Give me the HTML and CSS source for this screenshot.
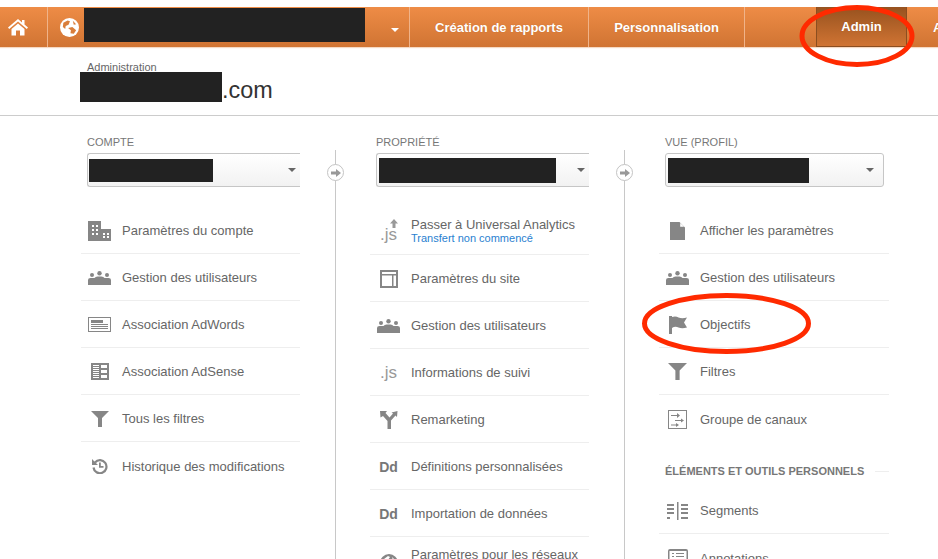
FILE: index.html
```html
<!DOCTYPE html>
<html lang="fr">
<head>
<meta charset="utf-8">
<title>Administration</title>
<link rel="stylesheet" href="styles.css">
</head>
<body>
<svg width="0" height="0" class="defs">
  <defs>
    <symbol id="i-users" viewBox="0 0 23 14">
      <circle cx="11.500" cy="2.200" r="2.200"/><circle cx="4" cy="4" r="2"/><circle cx="19" cy="4" r="2"/>
      <path d="M0 14V9Q0 7 2.500 7H6.500Q7.500 5.500 9.500 5.500H13.500Q15.500 5.500 16.500 7H20.500Q23 7 23 9V14Z"/>
    </symbol>
    <symbol id="i-filter" viewBox="0 0 18 16">
      <path d="M0 0H18L11 7V16H7V7Z"/>
    </symbol>
  </defs>
</svg>
<header class="nav">
  <a class="nav-home"><svg viewBox="0 0 20 18" width="20" height="18" class="ico-white"><path d="M10 1 0 9.500 1.200 11 10 3.600 18.800 11 20 9.500 16.500 6.500V2H14V4.400ZM3.500 11V17.500H8V12.500H12V17.500H16.500V11L10 5.500Z"/></svg></a>
  <div class="nav-account">
    <svg viewBox="0 0 20 20" width="19" height="19" class="globe"><circle cx="10" cy="10" r="10" fill="#fff"/><path d="M3.500 5 8 2.500 10.500 3.500 9 7 6 8.500 5.500 11.500 3 9.500ZM8.500 10.500 13 9.500 17 13 14.500 16.500 11 16 11.500 13ZM13.500 3 17 6.500 14.500 7Z" fill="#d97e3b"/></svg>
    <span class="redact redact-nav"></span>
    <span class="nav-caret"></span>
  </div>
  <a class="nav-tab nav-reports">Création de rapports</a>
  <a class="nav-tab nav-custom">Personnalisation</a>
  <div class="nav-spacer"></div>
  <a class="nav-tab nav-admin">Admin</a>
  <a class="nav-tab nav-next">A</a>
</header>

<section class="title">
  <div class="title-label">Administration</div>
  <div class="title-name"><span class="redact redact-title"></span>.com</div>
</section>

<main class="columns">
  <section class="col col-account">
    <h2 class="col-label">COMPTE</h2>
    <div class="select select-open"><span class="redact redact-1"></span><span class="caret"></span></div>
    <ul class="rows">
      <li class="row"><span class="icon"><svg viewBox="0 0 23 20" width="23" height="20"><path fill-rule="evenodd" d="M0 0H13V8H23V20H0ZM4 4V6H6V4ZM8 4V6H10V4ZM4 8V10H6V8ZM8 8V10H10V8ZM4 12V14H6V12ZM8 12V14H10V12ZM15 12V14H17V12ZM19 12V14H21V12ZM15 15V17H17V15ZM19 15V17H21V15Z"/></svg></span>Paramètres du compte</li>
      <li class="row"><span class="icon"><svg width="23" height="14"><use href="#i-users"/></svg></span>Gestion des utilisateurs</li>
      <li class="row"><span class="icon"><svg viewBox="0 0 23 15" width="23" height="15"><path fill-rule="evenodd" d="M0 0H23V15H0ZM1 1V14H22V1Z"/><path d="M3 3H15V6H3ZM3 7H20V8H3ZM3 9H20V10H3ZM3 11H20V12H3Z"/></svg></span>Association AdWords</li>
      <li class="row"><span class="icon"><svg viewBox="0 0 18 17" width="18" height="17"><path fill-rule="evenodd" d="M0 0H18V17H0ZM2 2V3H8V2ZM2 4V5H8V4ZM2 6V7H8V6ZM2 8V9H8V8ZM2 10V11H8V10ZM2 12V13H8V12ZM2 14V15H8V14ZM10 2V5H16V2ZM10 7V10H16V7ZM10 12V15H16V12Z"/></svg></span>Association AdSense</li>
      <li class="row"><span class="icon"><svg width="18" height="16"><use href="#i-filter"/></svg></span>Tous les filtres</li>
      <li class="row"><span class="icon"><svg viewBox="0 0 16 16" width="16" height="16"><path d="M3 4.500A6.500 6.500 0 1 1 1.500 9.500" class="stroke-icon"/><path d="M0 1V7H6ZM7 4.500H8.800V8H11.500V9.800H7Z"/></svg></span>Historique des modifications</li>
    </ul>
  </section>

  <div class="rail"><span class="rail-dot"><svg viewBox="0 0 10 8" width="10" height="8"><path d="M0 2.500H5V0L10 4 5 8V5.500H0Z"/></svg></span></div>

  <section class="col col-property">
    <h2 class="col-label">PROPRIÉTÉ</h2>
    <div class="select select-open select-wide"><span class="redact redact-2"></span><span class="caret"></span></div>
    <ul class="rows">
      <li class="row row-js"><span class="icon icon-js">.js<svg viewBox="0 0 8 9" width="8" height="9" class="js-up"><path d="M4 0 8 4.500H5.500V9H2.500V4.500H0Z"/></svg></span><span class="row-two">Passer à Universal Analytics<small class="row-sub">Transfert non commencé</small></span></li>
      <li class="row"><span class="icon"><svg viewBox="0 0 18 18" width="18" height="18"><path fill-rule="evenodd" d="M0 0H18V18H0ZM2 2V4H16V2ZM2 5.500V16H12V5.500ZM13.500 5.500V16H16V5.500Z"/></svg></span>Paramètres du site</li>
      <li class="row"><span class="icon"><svg width="23" height="14"><use href="#i-users"/></svg></span>Gestion des utilisateurs</li>
      <li class="row"><span class="icon icon-js">.js</span>Informations de suivi</li>
      <li class="row"><span class="icon"><svg viewBox="0 0 18 18" width="18" height="18"><path d="M0 0H7L5.500 2 9.500 6.500 13 2.500 11.500 1.500 17.500 0 17 6 15.500 4.500 11 9.500V18H7.500V10L3 5 0.500 6.500Z"/></svg></span>Remarketing</li>
      <li class="row"><span class="icon icon-dd">Dd</span>Définitions personnalisées</li>
      <li class="row"><span class="icon icon-dd">Dd</span>Importation de données</li>
      <li class="row row-social"><span class="icon"><svg viewBox="0 0 18 18" width="18" height="18"><path fill-rule="evenodd" d="M9 0A9 9 0 1 1 9 18 9 9 0 0 1 9 0ZM4 5 8 2 10 3 8 6 5 7ZM12 3 15 6 13 6.500Z"/></svg></span><span class="row-two">Paramètres pour les réseaux</span></li>
    </ul>
  </section>

  <div class="rail"><span class="rail-dot"><svg viewBox="0 0 10 8" width="10" height="8"><path d="M0 2.500H5V0L10 4 5 8V5.500H0Z"/></svg></span></div>

  <section class="col col-view">
    <h2 class="col-label">VUE (PROFIL)</h2>
    <div class="select select-closed"><span class="redact redact-3"></span><span class="caret"></span></div>
    <ul class="rows">
      <li class="row"><span class="icon"><svg viewBox="0 0 15 18" width="15" height="18"><path d="M0 0H9.500L15 5.500V18H0ZM10.200 1V4.800H14Z" fill-rule="evenodd"/></svg></span>Afficher les paramètres</li>
      <li class="row"><span class="icon"><svg width="23" height="14"><use href="#i-users"/></svg></span>Gestion des utilisateurs</li>
      <li class="row"><span class="icon"><svg viewBox="0 0 18 18" width="18" height="18"><path d="M0 0H3V18H0ZM3 1Q7 0 9.500 1.500 13 3 18 1.500L15 6.500 18 11.500Q13 13 9.500 11.500 6 10 3 12Z"/></svg></span>Objectifs</li>
      <li class="row"><span class="icon"><svg width="19" height="17"><use href="#i-filter"/></svg></span>Filtres</li>
      <li class="row row-last"><span class="icon"><svg viewBox="0 0 19 19" width="19" height="19"><path fill-rule="evenodd" d="M0 0H19V19H0ZM1 1V18H18V1Z"/><path d="M3 5H9V3L12 5.500 9 8V6H3ZM7 10H13V8.500L16 10.500 13 12.500V11H7ZM3 14.500H8V13L11 15 8 17V15.500H3Z"/></svg></span>Groupe de canaux</li>
    </ul>
    <h3 class="section-title"><span>ÉLÉMENTS ET OUTILS PERSONNELS</span></h3>
    <ul class="rows">
      <li class="row row-seg"><span class="icon"><svg viewBox="0 0 21 18" width="21" height="18"><path d="M10 0H11.500V18H10ZM0 2H7V4H0ZM14 2H21V4H14ZM0 6H7V8H0ZM14 6H21V8H14ZM0 10H7V12H0ZM14 10H21V12H14ZM0 15H3V17H0ZM14 15H21V17H14Z"/></svg></span>Segments</li>
      <li class="row"><span class="icon"><svg viewBox="0 0 20 18" width="20" height="18"><path fill-rule="evenodd" d="M2 0H18Q20 0 20 2V16H0V2Q0 0 2 0ZM1.500 2V14.500H18.500V2ZM4 4H6V5H4ZM8 4H16V5H8ZM4 7H6V8H4ZM8 7H16V8H8ZM4 10H6V11H4ZM8 10H16V11H8Z"/></svg></span>Annotations</li>
    </ul>
  </section>
</main>

<svg class="mark mark-admin" viewBox="0 0 118 66" width="118" height="66"><ellipse cx="59" cy="33" rx="55" ry="28.500"/></svg>
<svg class="mark mark-goal" viewBox="0 0 172 64" width="172" height="64"><ellipse cx="86.500" cy="32.500" rx="82" ry="28"/></svg>
</body>
</html>
```
FILE: styles.css
```css
* { box-sizing: border-box; }
html, body { margin: 0; padding: 0; }
body {
  width: 938px;
  height: 559px;
  overflow: hidden;
  position: relative;
  background: #fff;
  color: #666;
  font-family: "Liberation Sans", Arial, sans-serif;
  font-size: 13px;
}
.defs { position: absolute; }
ul { list-style: none; margin: 0; padding: 0; }
h2, h3 { margin: 0; font-weight: normal; }

.redact { display: block; background: #222; flex: none; }

/* top bar */
.nav {
  display: flex;
  align-items: stretch;
  height: 40px;
  margin-top: 7px;
  background: linear-gradient(#ee8c46, #d07433);
  box-shadow: 0 1px 1px #f5d9c4;
  color: #fff;
  font-size: 13px;
  font-weight: bold;
}
.nav > * { flex: none; }
.nav-home {
  width: 48px;
  display: flex;
  align-items: center;
  justify-content: center;
  padding-right: 12px;
  border-right: 1px solid #f0b389;
}
.ico-white { fill: #fff; }
.nav-account {
  width: 362px;
  display: flex;
  align-items: center;
  padding-left: 12px;
  border-right: 1px solid #f0b389;
}
.redact-nav { width: 281px; height: 34px; margin-left: 5px; margin-top: -4px; }
.nav-caret {
  margin-left: 26px;
  margin-top: 6px;
  border: 4px solid transparent;
  border-top-color: #fff;
  border-bottom-width: 0;
}
.nav-tab {
  display: flex;
  align-items: center;
  justify-content: center;
  text-shadow: 0 0 1px rgba(120, 60, 10, .3);
}
.nav-reports { width: 179px; border-right: 1px solid #f0b389; }
.nav-custom { width: 156px; border-right: 1px solid #f0b389; }
.nav-spacer { width: 71px; }
.nav-admin {
  width: 91px;
  background: linear-gradient(#97521f, #d07433);
  border: 1px solid #8b4e20;
  border-top: 0;
}
.nav-next { width: 31px; justify-content: flex-start; padding-left: 26px; }

/* page title */
.title {
  height: 69px;
  padding: 14px 0 0 80px;
  border-bottom: 1px solid #ccc;
}
.title-label {
  padding-left: 7px;
  font-size: 11px;
  line-height: 12px;
  height: 11px;
  color: #666;
}
.title-name {
  display: flex;
  height: 30px;
  font-size: 23.400px;
  line-height: 36px;
  color: #333;
}
.redact-title { width: 142px; height: 30px; }

/* columns */
.columns {
  display: flex;
  align-items: stretch;
  height: 444px;
}
.col { flex: none; padding-top: 20px; }
.col-account { width: 219px; margin-left: 81px; }
.col-property { width: 219px; }
.col-view { width: 230px; }

.rail {
  flex: none;
  width: 70px;
  margin-top: 34px;
  position: relative;
  display: flex;
  justify-content: center;
}
.rail::before {
  content: "";
  width: 1px;
  background: #c8c8c8;
}
.rail-dot {
  position: absolute;
  top: 14px;
  left: 27px;
  width: 17px;
  height: 17px;
  border: 1px solid #c4c4c4;
  border-radius: 50%;
  background: #fff;
  display: flex;
  align-items: center;
  justify-content: center;
  fill: #999;
}
.col-label {
  padding-left: 6px;
  font-size: 11px;
  line-height: 13px;
  color: #777;
}
.select {
  display: flex;
  align-items: center;
  justify-content: space-between;
  height: 34px;
  margin: 4px 0 0 6px;
  padding: 0 9px 0 1px;
  background: linear-gradient(#fff, #f2f2f2);
  border: 1px solid #c6c6c6;
  border-radius: 3px;
}
.select-open { border-right: 0; border-radius: 3px 0 0 3px; padding-right: 4px; }
.select-closed { width: 219px; padding-left: 2px; }
.select-wide { padding-left: 2px; }
.caret {
  border: 4px solid transparent;
  border-top-color: #666;
  border-bottom-width: 0;
}
.redact-1 { width: 124px; height: 23px; }
.redact-2 { width: 177px; height: 25px; }
.redact-3 { width: 141px; height: 25px; }

.rows { margin-top: 20px; }
.row {
  display: flex;
  align-items: center;
  height: 47px;
  padding-top: 1px;
  border-bottom: 1px solid #eee;
  font-size: 13px;
  color: #666;
  fill: #868686;
}
.row:last-child { border-bottom: 0; }
.icon {
  flex: none;
  width: 37px;
  margin-right: 4px;
  display: flex;
  align-items: center;
  justify-content: center;
  position: relative;
}
.stroke-icon { fill: none; stroke: #868686; stroke-width: 2.200; }
.icon-js { font-size: 17px; color: #999; }
.row-js .icon-js { margin-top: 6px; }
.js-up { position: absolute; top: -6px; right: 9px; fill: #999; }
.icon-dd { font-size: 14px; font-weight: bold; color: #777; }
.row-two { display: flex; flex-direction: column; line-height: 14px; }
.row-sub { font-size: 11px; line-height: 13px; color: #2a7fd0; }
.col-property .rows { margin-top: 21px; }
.row-social { align-items: flex-start; padding-top: 11px; }
.row-social .icon { margin-top: 6px; }

.section-title {
  display: flex;
  align-items: center;
  margin-top: 23px;
  padding-left: 6px;
  font-size: 11px;
  font-weight: bold;
  line-height: 13px;
  color: #777;
}
.section-title::after {
  content: "";
  flex: 1;
  height: 1px;
  margin-left: 11px;
  background: #eee;
}
.section-title + .rows { margin-top: 9px; }

/* hand-drawn annotations */
.mark { position: absolute; fill: none; stroke: #ff2a00; stroke-width: 5; }
.mark-admin { left: 798px; top: 3px; }
.mark-goal { left: 640px; top: 291px; }
```
